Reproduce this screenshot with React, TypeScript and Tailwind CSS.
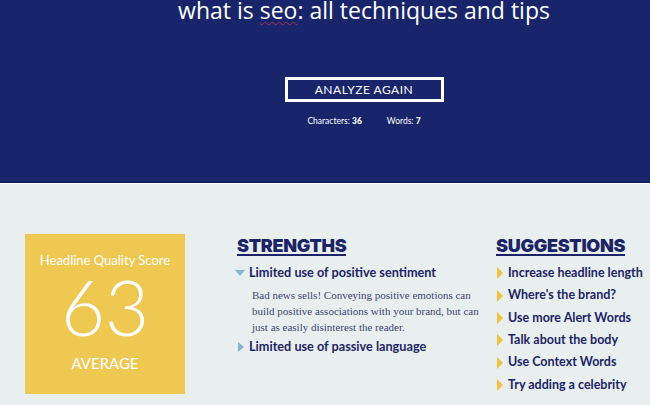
import React from 'react';

const strengths = [
  {
    title: 'Limited use of positive sentiment',
    open: true,
    body: 'Bad news sells! Conveying positive emotions can build positive associations with your brand, but can just as easily disinterest the reader.',
  },
  { title: 'Limited use of passive language', open: false, body: '' },
];

const suggestions = [
  'Increase headline length',
  "Where's the brand?",
  'Use more Alert Words',
  'Talk about the body',
  'Use Context Words',
  'Try adding a celebrity',
];

export default function App() {
  return (
    <div className="w-[650px] h-[405px] overflow-hidden bg-[#e9efef] font-['Lato','Open_Sans',sans-serif]">

      {/* Header */}
      <div className="h-[183px] pl-[78px] bg-[#18256a] flex flex-col items-center border-b border-[#0d1850]">
        <h1 className="text-[23px] leading-[20px] text-white font-['Open_Sans',sans-serif] font-normal">
          what is <span className="underline decoration-[#b03050] decoration-wavy decoration-1 underline-offset-2">seo</span>: all techniques and tips
        </h1>
        <button className="mt-[57px] w-[159px] h-[25px] border-[3px] border-white text-white text-[12px] tracking-[0.5px] leading-none">
          ANALYZE AGAIN
        </button>
        <div className="mt-[13px] flex gap-[25px] text-white text-[8.5px]">
          <span>Characters: <b className="font-black">36</b></span>
          <span>Words: <b className="font-black">7</b></span>
        </div>
      </div>
      <div className="h-px bg-white" />

      {/* Body */}
      <div className="flex pl-[25px] pt-[50px]">

        {/* Score */}
        <div className="w-[160px] h-[160px] bg-[#efc852] flex flex-col items-center text-white">
          <p className="mt-[17px] text-[13px] leading-[18px]">Headline Quality Score</p>
          <p className="text-[76px] font-light leading-[76px]">63</p>
          <p className="mt-[8px] text-[15px] leading-[20px]">AVERAGE</p>
        </div>

        {/* Strengths */}
        <div className="ml-[50px] w-[255px] text-[#1b2466]">
          <h2 className="inline-block ml-[2px] text-[18px] font-black leading-[17px] border-b-2 border-[#1b2466] font-['Inter',sans-serif] tracking-[-0.3px]">STRENGTHS</h2>
          <ul className="mt-[4px]">
            {strengths.map((s) => (
              <li key={s.title}>
                <div className="flex items-center gap-[4px] h-[22px]">
                  {s.open ? (
                    <span className="w-0 h-0 border-l-[5px] border-r-[5px] border-t-[6px] border-l-transparent border-r-transparent border-t-[#7fb6d8]" />
                  ) : (
                    <span className="ml-[3px] mr-[1px] w-0 h-0 border-t-[5px] border-b-[5px] border-l-[6px] border-t-transparent border-b-transparent border-l-[#7fb6d8]" />
                  )}
                  <span className="text-[12.7px] font-bold">{s.title}</span>
                </div>
                {s.body && (
                  <p className="mt-[3px] mb-[1px] ml-[17px] text-[11px] leading-[16px] text-[#3d4577] font-['Liberation_Serif',serif]">
                    {s.body}
                  </p>
                )}
              </li>
            ))}
          </ul>
        </div>

        {/* Suggestions */}
        <div className="ml-[6px] text-[#1b2466]">
          <h2 className="inline-block text-[18px] font-black leading-[17px] border-b-2 border-[#1b2466] font-['Inter',sans-serif] tracking-[-0.3px]">SUGGESTIONS</h2>
          <ul className="mt-[4px]">
            {suggestions.map((t) => (
              <li key={t} className="flex items-center gap-[5px] h-[22.4px]">
                <span className="ml-[1px] w-0 h-0 border-t-[6px] border-b-[6px] border-l-[6px] border-t-transparent border-b-transparent border-l-[#f2c041]" />
                <span className="text-[12.5px] font-bold">{t}</span>
              </li>
            ))}
          </ul>
        </div>
      </div>
    </div>
  );
}
